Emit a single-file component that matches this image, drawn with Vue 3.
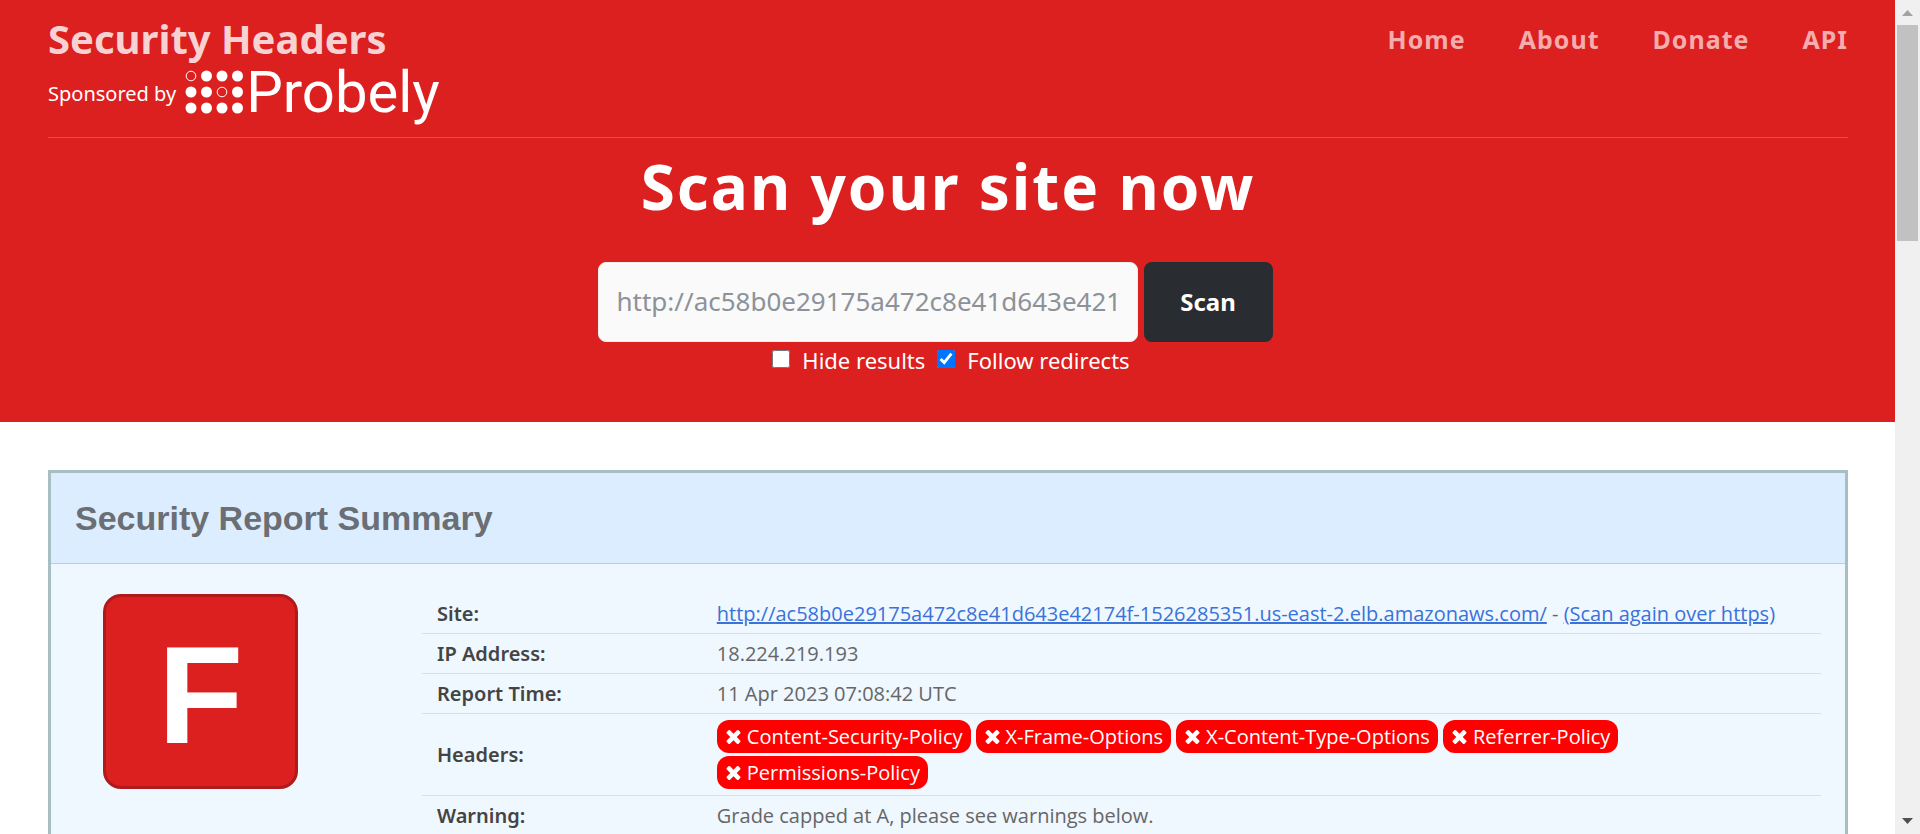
<script setup>
import { ref } from 'vue'

const siteUrl = 'http://ac58b0e29175a472c8e41d643e42174f-1526285351.us-east-2.elb.amazonaws.com/'
const navItems = ['Home', 'About', 'Donate', 'API']
const missingHeaders = [
  'Content-Security-Policy',
  'X-Frame-Options',
  'X-Content-Type-Options',
  'Referrer-Policy',
  'Permissions-Policy',
]
const address = ref('')
const hideResults = ref(false)
const followRedirects = ref(true)

const dots = []
for (let row = 0; row < 3; row++) {
  for (let col = 0; col < 4; col++) {
    const hollow = (row === 0 && col === 0) || (row === 1 && col === 2)
    dots.push({ id: row * 4 + col, cx: 6 + col * 15.5, cy: 6 + row * 16, hollow })
  }
}
</script>

<template>
  <div class="window">
    <div class="page">
      <header class="hero">
        <div class="topbar">
          <div class="brand">
            <a class="brand-name" href="#">Security Headers</a>
            <div class="sponsor">
              <span>Sponsored by</span>
              <a class="probely" href="#">
                <svg class="dots" viewBox="0 0 58 44" aria-hidden="true">
                  <circle
                    v-for="d in dots"
                    :key="d.id"
                    :cx="d.cx"
                    :cy="d.cy"
                    :r="d.hollow ? 4.8 : 5.5"
                    :class="{ hollow: d.hollow }"
                  />
                </svg>
                <span class="wordmark">Probely</span>
              </a>
            </div>
          </div>
          <nav class="nav">
            <a v-for="item in navItems" :key="item" href="#">{{ item }}</a>
          </nav>
        </div>

        <h1>Scan your site now</h1>

        <form class="scan" @submit.prevent>
          <div class="scan-row">
            <input v-model="address" class="address" type="text" :placeholder="siteUrl" aria-label="Site address" />
            <button class="scan-button" type="submit">Scan</button>
          </div>
          <div class="options">
            <label><input v-model="hideResults" type="checkbox" />Hide results</label>
            <label><input v-model="followRedirects" type="checkbox" />Follow redirects</label>
          </div>
        </form>
      </header>

      <main class="content">
        <section class="report">
          <h2>Security Report Summary</h2>
          <div class="report-body">
            <div class="grade"><span>F</span></div>
            <table>
              <tbody>
                <tr>
                  <th scope="row">Site:</th>
                  <td><a href="#">{{ siteUrl }}</a> - <a href="#">(Scan again over https)</a></td>
                </tr>
                <tr>
                  <th scope="row">IP Address:</th>
                  <td>18.224.219.193</td>
                </tr>
                <tr>
                  <th scope="row">Report Time:</th>
                  <td>11 Apr 2023 07:08:42 UTC</td>
                </tr>
                <tr>
                  <th scope="row">Headers:</th>
                  <td>
                    <ul class="pills">
                      <li v-for="name in missingHeaders" :key="name">
                        <svg viewBox="110 110 1188 1188" aria-hidden="true">
                          <path
                            transform="translate(0 1280) scale(1 -1)"
                            d="M1298 214q0 -40 -28 -68l-136 -136q-28 -28 -68 -28t-68 28l-294 294l-294 -294q-28 -28 -68 -28t-68 28l-136 136q-28 28 -28 68t28 68l294 294l-294 294q-28 28 -28 68t28 68l136 136q28 28 68 28t68 -28l294 -294l294 294q28 28 68 28t68 -28l136 -136q28 -28 28 -68t-28 -68l-294 -294l294 -294q28 -28 28 -68z"
                          />
                        </svg>
                        {{ name }}
                      </li>
                    </ul>
                  </td>
                </tr>
                <tr>
                  <th scope="row">Warning:</th>
                  <td>Grade capped at A, please see warnings below.</td>
                </tr>
              </tbody>
            </table>
          </div>
        </section>
      </main>
    </div>

    <div class="scrollbar" aria-hidden="true">
      <svg class="arrow up" viewBox="0 0 11 6"><path d="M5.5 0 11 6H0z" /></svg>
      <div class="thumb"></div>
      <svg class="arrow down" viewBox="0 0 11 6"><path d="M0 0h11L5.5 6z" /></svg>
    </div>
  </div>
</template>

<style>
body {
  margin: 0;
  overflow: hidden;
}
</style>

<style scoped>
* {
  box-sizing: border-box;
}

.window {
  display: flex;
  height: 100vh;
  font-family: 'Noto Sans', sans-serif;
  font-size: 20px;
  line-height: 28px;
  color: #666;
  background: #fff;
}

.page {
  flex: 1;
  min-width: 0;
  overflow: hidden;
}

.hero {
  padding: 12px 47px 46px 48px;
  color: #fff;
  background: #dc1f1f;
}

.topbar {
  display: flex;
  justify-content: space-between;
  align-items: flex-start;
  padding-bottom: 15px;
  border-bottom: 1px solid #e44c4c;
}

.brand-name {
  display: block;
  font-size: 40px;
  line-height: 54px;
  font-weight: 700;
  color: #f8d2d2;
  text-decoration: none;
}

.sponsor {
  display: flex;
  align-items: center;
  gap: 9px;
  height: 56px;
}

.probely {
  display: flex;
  align-items: center;
  gap: 3px;
  margin-bottom: 5px;
  color: #fff;
  text-decoration: none;
}

.dots {
  width: 58px;
  height: 44px;
  fill: #fff;
}

.dots .hollow {
  fill: none;
  stroke: #fff;
}

.wordmark {
  font-family: Roboto, sans-serif;
  font-size: 58px;
  line-height: 58px;
}

.nav {
  display: flex;
  gap: 53px;
  padding-top: 9px;
}

.nav a {
  font-size: 25px;
  line-height: 36px;
  font-weight: 700;
  letter-spacing: 1px;
  color: #f4acac;
  text-decoration: none;
}

h1 {
  margin: 6px 0 0;
  font-size: 62px;
  line-height: 84px;
  font-weight: 700;
  letter-spacing: 2px;
  text-align: center;
}

.scan {
  margin-top: 34px;
}

.scan-row {
  display: flex;
  justify-content: center;
  gap: 6px;
  padding-right: 26px;
}

.address {
  width: 540px;
  height: 80px;
  padding: 0 18px 2px;
  font-family: inherit;
  font-size: 26px;
  color: #555;
  background: #fafafa;
  border: 1px solid #eee;
  border-radius: 8px;
}

.address::placeholder {
  color: #8d9299;
}

.scan-button {
  width: 129px;
  padding: 0 0 2px;
  font-family: inherit;
  font-size: 24px;
  font-weight: 700;
  color: #fff;
  background: #292c30;
  border: 0;
  border-radius: 8px;
}

.options {
  display: flex;
  justify-content: center;
  gap: 12px;
  margin-top: 4px;
  padding-left: 6px;
  font-size: 22px;
  line-height: 28px;
}

.options label {
  display: flex;
  align-items: flex-start;
  gap: 12px;
  height: 30px;
}

.options input {
  width: 18px;
  height: 18px;
  margin: 4px 0 0;
}

.content {
  padding: 48px 47px 48px 48px;
}

.report {
  background: #eff7ff;
  border: 3px solid #a7bfc3;
}

h2 {
  margin: 0;
  padding: 24px;
  font-family: 'Liberation Sans', Arial, sans-serif;
  font-size: 34px;
  line-height: 42px;
  font-weight: 700;
  color: #6b6e72;
  background: #dcedff;
  border-bottom: 1px solid #bdced6;
}

.report-body {
  display: flex;
  align-items: flex-start;
  padding: 30px 24px 30px 52px;
}

.grade {
  display: flex;
  flex: none;
  align-items: center;
  justify-content: center;
  width: 195px;
  height: 195px;
  padding-top: 6px;
  margin-right: 124px;
  font-family: 'Liberation Sans', Arial, sans-serif;
  font-size: 140px;
  line-height: 180px;
  font-weight: 700;
  color: #fff;
  background: #dc1f1f;
  border: 3px solid #b01a1a;
  border-radius: 18px;
}

table {
  flex: 1;
  border-collapse: collapse;
}

tr {
  border-bottom: 1px solid #ddd;
}

th,
td {
  padding: 6px 0 6px 15px;
  font-size: 20px;
  line-height: 27px;
  text-align: left;
}

th {
  width: 20%;
  font-weight: 600;
  color: #444;
}

td {
  font-family: 'Open Sans', 'Noto Sans', sans-serif;
}

td a {
  color: #3b72d9;
}

.pills {
  display: flex;
  flex-wrap: wrap;
  gap: 3px 5px;
  max-width: 1000px;
  margin: 0;
  padding: 0;
  list-style: none;
}

.pills li {
  display: flex;
  align-items: center;
  gap: 6px;
  padding: 3px 8px 3px 9px;
  color: #fff;
  background: #f00;
  border-radius: 12px;
}

.pills svg {
  width: 15px;
  height: 14px;
  fill: #fff;
}

.scrollbar {
  display: flex;
  flex: none;
  flex-direction: column;
  align-items: center;
  width: 25px;
  background: #f0f0f0;
}

.arrow {
  width: 11px;
  height: 6px;
}

.up {
  margin: 10px 0 9px;
  fill: #a3a3a3;
}

.down {
  margin: auto 0 10px;
  fill: #505050;
}

.thumb {
  width: 21px;
  height: 216px;
  background: #c1c1c1;
}
</style>
